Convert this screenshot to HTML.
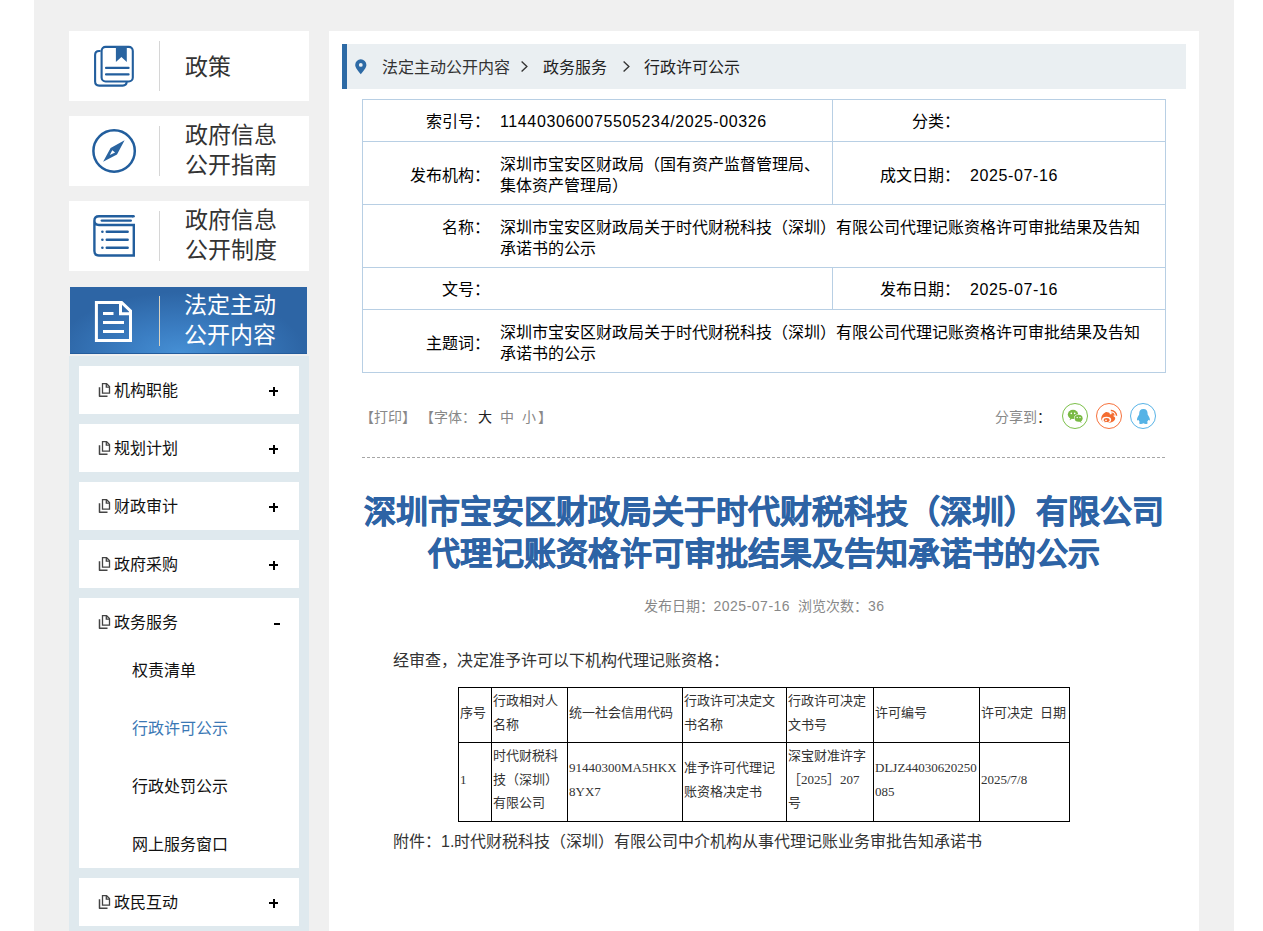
<!DOCTYPE html>
<html lang="zh-CN"><head><meta charset="utf-8">
<style>
*{margin:0;padding:0;box-sizing:border-box}
html,body{width:1263px;height:931px;overflow:hidden;background:#fff}
body{font-family:"Liberation Sans",sans-serif;color:#333;position:relative}
.a{position:absolute}
.nw{white-space:nowrap}
.j{display:inline-block;text-align:justify;text-align-last:justify}
#page{left:34px;top:0;width:1200px;height:931px;background:#f0f0f0}
.nbox{background:#fff;left:69px;width:240px;height:70px}
.sep{width:1px;height:50px;background:#d6d6d6;left:159px}
.ntxt{left:185px;font-size:23px;line-height:30px;color:#333}
.active{left:70px;top:287px;width:237px;height:67px;background:radial-gradient(ellipse 125px 62px at 110px 67px,#4690d5 0%,#3b7ec3 40%,#2d65a5 100%);border-bottom:1px solid #245c9c}
.subbg{left:69px;top:356px;width:240px;height:575px;background:#dfe9ee}
.item{left:79px;width:220px;background:#fff}
.itxt{font-size:16px;line-height:24px;color:#111}
.plus{width:9px;height:9px}
#main{left:329px;top:31px;width:870px;height:900px;background:#fff}
#bc{left:342px;top:44px;width:844px;height:45px;background:#eaeff2;border-left:5px solid #2d6aa5}
.bct{font-size:16px;line-height:24px;top:56px;color:#333}
.hl{background:#b8cfe4}
.lbl{font-size:16px;line-height:21px;color:#000;text-align:right}
.val{font-size:16px;line-height:21px;color:#000}
.tool{font-size:14px;line-height:20px;color:#888}
.title{left:362px;width:804px;text-align:center;font-size:32px;line-height:42px;font-weight:bold;color:#2d63a5;-webkit-text-stroke:0.6px #2d63a5}
.it{border-collapse:collapse;font-size:13px;color:#333}
.vl{background:#000}
.ct{font-size:13px;line-height:23.5px;color:#333}
.sf{font-family:"Liberation Serif",serif}
</style></head><body>
<div id="page" class="a"></div>

<!-- sidebar top boxes -->
<div class="a nbox" style="top:31px"></div>
<div class="a sep" style="top:41px"></div>
<div class="a ntxt nw" style="top:52px"><span class="j" style="width:2em">政策</span></div>
<svg class="a" style="left:88px;top:40px" width="52" height="52" viewBox="88 40 52 52">
 <rect x="101.6" y="46.9" width="31.2" height="34.6" rx="4" fill="none" stroke="#225e9d" stroke-width="2.1"/>
 <path d="M100.6 51 H99.1 Q95.1 51 95.1 55 V81.6 Q95.1 85.6 99.1 85.6 H122.7 Q126.7 85.6 126.7 81.5" fill="none" stroke="#225e9d" stroke-width="2.1"/>
 <path d="M115.9 46 H126.8 V62 L121.4 57 L115.9 62 Z" fill="#2a64a0"/>
 <path d="M106 67.9 H128.6 M106 74.4 H128.6" stroke="#225e9d" stroke-width="2.1" stroke-linecap="round"/>
</svg>

<div class="a nbox" style="top:116px"></div>
<div class="a sep" style="top:126px"></div>
<div class="a ntxt nw" style="top:120px"><span class="j" style="width:4em">政府信息</span><br><span class="j" style="width:4em">公开指南</span></div>
<svg class="a" style="left:88px;top:124px" width="52" height="52" viewBox="88 124 52 52">
 <circle cx="114.1" cy="151" r="20.7" fill="none" stroke="#225e9d" stroke-width="2.5"/>
 <path d="M124.6 140.2 L117 154.4 L103.1 161.7 L110.6 148 Z M109.8 155 L115.1 152.5 L112.3 150.3 Z" fill="#2a64a0" fill-rule="evenodd"/>
</svg>

<div class="a nbox" style="top:201px"></div>
<div class="a sep" style="top:211px"></div>
<div class="a ntxt nw" style="top:205px"><span class="j" style="width:4em">政府信息</span><br><span class="j" style="width:4em">公开制度</span></div>
<svg class="a" style="left:88px;top:208px" width="52" height="52" viewBox="88 208 52 52">
 <g fill="none" stroke="#225e9d" stroke-width="2.4" stroke-linecap="round">
 <path d="M133 216.3 H99 Q94.4 216.3 94.4 220.8 Q94.4 225 99 225 H133.8 V255.5 H99 Q94.4 255.5 94.4 251 V220.8" stroke-linecap="butt"/>
 <path d="M133 216.3 H133.6"/>
 <path d="M101.8 220.6 H130.8"/>
 <path d="M106.7 231.7 H127.7 M106.7 239.7 H127.7 M106.7 247.8 H127.7"/>
 </g>
 <circle cx="102.4" cy="231.7" r="1.3" fill="#225e9d"/><circle cx="102.4" cy="239.7" r="1.3" fill="#225e9d"/><circle cx="102.4" cy="247.8" r="1.3" fill="#225e9d"/>
</svg>

<!-- active -->
<div class="a active"></div>
<div class="a" style="left:159px;top:296px;width:1px;height:50px;background:#d9d2c0"></div>
<div class="a ntxt nw" style="top:290px;left:184px;color:#fff"><span class="j" style="width:4em">法定主动</span><br><span class="j" style="width:4em">公开内容</span></div>
<svg class="a" style="left:88px;top:296px" width="52" height="52" viewBox="88 296 52 52">
 <path d="M96.4 302.4 H121.6 L130.5 311 V340.5 H96.4 Z" fill="none" stroke="#fff" stroke-width="3"/>
 <path d="M120.5 302.4 V313.8 H130.5" fill="none" stroke="#fff" stroke-width="3"/>
 <path d="M103 313.6 H113.5 M103 322.6 H124 M103 331.4 H124" stroke="#fff" stroke-width="3"/>
</svg>

<div class="a subbg"></div>
<div class="a item" style="top:366px;height:48px"></div>
<svg class="a" style="left:95px;top:378px" width="20" height="22" viewBox="0 0 20 22"><g fill="none" stroke="#444" stroke-width="1.3"><path d="M7.5 5.7 H11.6 L14.5 8.6 V15.1 H7.5 Z"/><path d="M11.3 5.7 V9.2 H14.5"/><path d="M4.5 9.3 V18.2 H12.5" stroke-width="1.5" stroke-linejoin="round"/></g></svg>
<div class="a itxt nw" style="left:114px;top:379px"><span class="j" style="width:4em">机构职能</span></div>
<div class="a" style="left:269px;top:390px;width:9px;height:2px;background:#000"></div>
<div class="a" style="left:272.5px;top:387px;width:2px;height:9px;background:#000"></div>
<div class="a item" style="top:424px;height:48px"></div>
<svg class="a" style="left:95px;top:436px" width="20" height="22" viewBox="0 0 20 22"><g fill="none" stroke="#444" stroke-width="1.3"><path d="M7.5 5.7 H11.6 L14.5 8.6 V15.1 H7.5 Z"/><path d="M11.3 5.7 V9.2 H14.5"/><path d="M4.5 9.3 V18.2 H12.5" stroke-width="1.5" stroke-linejoin="round"/></g></svg>
<div class="a itxt nw" style="left:114px;top:437px"><span class="j" style="width:4em">规划计划</span></div>
<div class="a" style="left:269px;top:448px;width:9px;height:2px;background:#000"></div>
<div class="a" style="left:272.5px;top:445px;width:2px;height:9px;background:#000"></div>
<div class="a item" style="top:482px;height:48px"></div>
<svg class="a" style="left:95px;top:494px" width="20" height="22" viewBox="0 0 20 22"><g fill="none" stroke="#444" stroke-width="1.3"><path d="M7.5 5.7 H11.6 L14.5 8.6 V15.1 H7.5 Z"/><path d="M11.3 5.7 V9.2 H14.5"/><path d="M4.5 9.3 V18.2 H12.5" stroke-width="1.5" stroke-linejoin="round"/></g></svg>
<div class="a itxt nw" style="left:114px;top:495px"><span class="j" style="width:4em">财政审计</span></div>
<div class="a" style="left:269px;top:506px;width:9px;height:2px;background:#000"></div>
<div class="a" style="left:272.5px;top:503px;width:2px;height:9px;background:#000"></div>
<div class="a item" style="top:540px;height:48px"></div>
<svg class="a" style="left:95px;top:552px" width="20" height="22" viewBox="0 0 20 22"><g fill="none" stroke="#444" stroke-width="1.3"><path d="M7.5 5.7 H11.6 L14.5 8.6 V15.1 H7.5 Z"/><path d="M11.3 5.7 V9.2 H14.5"/><path d="M4.5 9.3 V18.2 H12.5" stroke-width="1.5" stroke-linejoin="round"/></g></svg>
<div class="a itxt nw" style="left:114px;top:553px"><span class="j" style="width:4em">政府采购</span></div>
<div class="a" style="left:269px;top:564px;width:9px;height:2px;background:#000"></div>
<div class="a" style="left:272.5px;top:561px;width:2px;height:9px;background:#000"></div>
<div class="a item" style="top:598px;height:270px"></div>
<svg class="a" style="left:95px;top:610px" width="20" height="22" viewBox="0 0 20 22"><g fill="none" stroke="#444" stroke-width="1.3"><path d="M7.5 5.7 H11.6 L14.5 8.6 V15.1 H7.5 Z"/><path d="M11.3 5.7 V9.2 H14.5"/><path d="M4.5 9.3 V18.2 H12.5" stroke-width="1.5" stroke-linejoin="round"/></g></svg>
<div class="a itxt nw" style="left:114px;top:611px"><span class="j" style="width:4em">政务服务</span></div>
<div class="a" style="left:274px;top:623px;width:5.5px;height:2px;background:#000"></div>
<div class="a item" style="top:878px;height:48px"></div>
<svg class="a" style="left:95px;top:890px" width="20" height="22" viewBox="0 0 20 22"><g fill="none" stroke="#444" stroke-width="1.3"><path d="M7.5 5.7 H11.6 L14.5 8.6 V15.1 H7.5 Z"/><path d="M11.3 5.7 V9.2 H14.5"/><path d="M4.5 9.3 V18.2 H12.5" stroke-width="1.5" stroke-linejoin="round"/></g></svg>
<div class="a itxt nw" style="left:114px;top:891px"><span class="j" style="width:4em">政民互动</span></div>
<div class="a" style="left:269px;top:902px;width:9px;height:2px;background:#000"></div>
<div class="a" style="left:272.5px;top:899px;width:2px;height:9px;background:#000"></div>
<div class="a itxt nw" style="left:132px;top:659px;color:#111"><span class="j" style="width:4em">权责清单</span></div>
<div class="a itxt nw" style="left:132px;top:717px;color:#3b78b5"><span class="j" style="width:6em">行政许可公示</span></div>
<div class="a itxt nw" style="left:132px;top:775px;color:#111"><span class="j" style="width:6em">行政处罚公示</span></div>
<div class="a itxt nw" style="left:132px;top:833px;color:#111"><span class="j" style="width:6em">网上服务窗口</span></div>

<!-- main panel -->
<div id="main" class="a"></div>
<div id="bc" class="a"></div>
<svg class="a" style="left:352px;top:56.6px" width="18" height="20" viewBox="352 56 18 20">
 <path d="M360.8 73.2 C358 69.5 355.2 66.6 355.2 63.9 A5.6 5.6 0 0 1 366.4 63.9 C366.4 66.6 363.6 69.5 360.8 73.2 Z M360.8 62 A1.9 1.9 0 1 0 360.8 65.8 A1.9 1.9 0 1 0 360.8 62 Z" fill="#2d6aa5" fill-rule="evenodd"/>
</svg>
<div class="a bct nw" style="left:382px"><span class="j" style="width:8em">法定主动公开内容</span></div>
<svg class="a" style="left:518px;top:58px" width="12" height="16" viewBox="0 0 12 16"><path d="M3.6 3.4 L8.9 8.5 L3.6 13.6" fill="none" stroke="#333" stroke-width="1.35"/></svg>
<div class="a bct nw" style="left:543px;color:#222"><span class="j" style="width:4em">政务服务</span></div>
<svg class="a" style="left:620px;top:58px" width="12" height="16" viewBox="0 0 12 16"><path d="M3.6 3.4 L8.9 8.5 L3.6 13.6" fill="none" stroke="#333" stroke-width="1.35"/></svg>
<div class="a bct nw" style="left:644px;color:#222"><span class="j" style="width:6em">行政许可公示</span></div>

<div class="a hl" style="left:362px;top:99px;width:804px;height:1px"></div>
<div class="a hl" style="left:362px;top:141px;width:804px;height:1px"></div>
<div class="a hl" style="left:362px;top:204px;width:804px;height:1px"></div>
<div class="a hl" style="left:362px;top:267px;width:804px;height:1px"></div>
<div class="a hl" style="left:362px;top:309px;width:804px;height:1px"></div>
<div class="a hl" style="left:362px;top:372px;width:804px;height:1px"></div>
<div class="a hl" style="left:362px;top:99px;width:1px;height:274px"></div>
<div class="a hl" style="left:1165px;top:99px;width:1px;height:274px"></div>
<div class="a hl" style="left:832px;top:99px;width:1px;height:105px"></div>
<div class="a hl" style="left:832px;top:267px;width:1px;height:42px"></div>
<div class="a lbl nw" style="left:290px;width:200px;top:111px;line-height:21px"><span class="j" style="width:4em">索引号：</span></div>
<div class="a val nw" style="left:500px;top:111px;line-height:21px;letter-spacing:0.62px">114403060075505234/2025-00326</div>
<div class="a lbl nw" style="left:760px;width:200px;top:111px;line-height:21px"><span class="j" style="width:3em">分类：</span></div>
<div class="a lbl nw" style="left:290px;width:200px;top:165px;line-height:21px"><span class="j" style="width:5em">发布机构：</span></div>
<div class="a val nw" style="left:500px;top:154px;line-height:21px;"><span class="j" style="width:20em">深圳市宝安区财政局（国有资产监督管理局、</span><br><span class="j" style="width:8em">集体资产管理局）</span></div>
<div class="a lbl nw" style="left:760px;width:200px;top:165px;line-height:21px"><span class="j" style="width:5em">成文日期：</span></div>
<div class="a val nw" style="left:970px;top:165px;line-height:21px;letter-spacing:0.62px">2025-07-16</div>
<div class="a lbl nw" style="left:290px;width:200px;top:217px;line-height:21px"><span class="j" style="width:3em">名称：</span></div>
<div class="a val nw" style="left:500px;top:217px;line-height:21px;"><span class="j" style="width:40em">深圳市宝安区财政局关于时代财税科技（深圳）有限公司代理记账资格许可审批结果及告知</span><br><span class="j" style="width:6em">承诺书的公示</span></div>
<div class="a lbl nw" style="left:290px;width:200px;top:279px;line-height:21px"><span class="j" style="width:3em">文号：</span></div>
<div class="a lbl nw" style="left:760px;width:200px;top:279px;line-height:21px"><span class="j" style="width:5em">发布日期：</span></div>
<div class="a val nw" style="left:970px;top:279px;line-height:21px;letter-spacing:0.62px">2025-07-16</div>
<div class="a lbl nw" style="left:290px;width:200px;top:333px;line-height:21px"><span class="j" style="width:4em">主题词：</span></div>
<div class="a val nw" style="left:500px;top:322px;line-height:21px;"><span class="j" style="width:40em">深圳市宝安区财政局关于时代财税科技（深圳）有限公司代理记账资格许可审批结果及告知</span><br><span class="j" style="width:6em">承诺书的公示</span></div>
<div class="a tool nw" style="left:360px;top:407px"><span class="j" style="width:4em">【打印】</span></div>
<div class="a tool nw" style="left:420px;top:407px"><span class="j" style="width:4em">【字体：</span></div>
<div class="a tool nw" style="left:478px;top:407px;color:#222"><span class="j" style="width:1em">大</span></div>
<div class="a tool nw" style="left:500px;top:407px"><span class="j" style="width:1em">中</span></div>
<div class="a tool nw" style="left:522px;top:407px"><span class="j" style="width:1em">小</span><span style="margin-left:2px"><span class="j" style="width:1em">】</span></span></div>
<div class="a tool nw" style="left:995px;top:407px"><span class="j" style="width:3em">分享到</span><span style="color:#222"><span class="j" style="width:1em">：</span></span></div>
<div class="a" style="left:1062px;top:403px;width:26px;height:26px;border:1.6px solid #7cc04a;border-radius:50%"></div>
<div class="a" style="left:1096px;top:403px;width:26px;height:26px;border:1.6px solid #f7713b;border-radius:50%"></div>
<div class="a" style="left:1130px;top:403px;width:26px;height:26px;border:1.6px solid #57b3e7;border-radius:50%"></div>
<svg class="a" style="left:1062px;top:403px" width="26" height="26" viewBox="0 0 26 26">
 <ellipse cx="11" cy="11.4" rx="5.2" ry="4.6" fill="#79b944"/>
 <path d="M8.2 15 L7.6 17.2 L10.3 15.6 Z" fill="#79b944"/>
 <ellipse cx="16.6" cy="15.2" rx="4.6" ry="4" fill="#fff"/>
 <ellipse cx="16.6" cy="15.2" rx="4" ry="3.5" fill="#79b944"/>
 <path d="M18.6 18 L19.8 20 L17 18.6 Z" fill="#79b944"/>
 <circle cx="9.3" cy="10.4" r="0.8" fill="#fff"/><circle cx="12.7" cy="10.4" r="0.8" fill="#fff"/>
 <circle cx="15.2" cy="14.5" r="0.7" fill="#fff"/><circle cx="18" cy="14.5" r="0.7" fill="#fff"/>
</svg>
<svg class="a" style="left:1096px;top:403px" width="26" height="26" viewBox="0 0 26 26">
 <path d="M9.5 9.2 C6.8 10.6 5.2 13 5.2 15.4 C5.2 18.2 8.4 19.9 11.8 19.9 C16.2 19.9 19.2 17.6 19.2 15.3 C19.2 14 18.2 13.4 17.4 13.2 C17.8 12.2 17.8 11 16.4 10.9 C15.4 10.8 14.4 11.3 13.8 11.6 C14 10.6 13.6 9.6 12.6 9.4 C11.6 9.2 10.4 8.8 9.5 9.2 Z" fill="#f46c30"/>
 <ellipse cx="10.6" cy="16.8" rx="4.6" ry="3.1" fill="#fff"/>
 <ellipse cx="10.6" cy="17" rx="3" ry="2" fill="#f46c30"/>
 <circle cx="10" cy="17.4" r="0.8" fill="#fff"/>
 <path d="M14.8 7.6 A5.4 5.4 0 0 1 20.6 12.8" fill="none" stroke="#f46c30" stroke-width="1.5"/>
 <path d="M15.4 10 A2.6 2.6 0 0 1 18 12.6" fill="none" stroke="#f46c30" stroke-width="1.2"/>
</svg>
<svg class="a" style="left:1130px;top:403px" width="26" height="26" viewBox="0 0 26 26">
 <path d="M13.4 5.9 C10.4 5.9 9.2 8 9.2 10.4 L9.1 11.8 C8.2 13 7 14.8 7 16.6 C7 17.8 7.7 17.8 8.4 16.8 C8.7 17.8 9.2 18.5 9.8 19.1 C9 19.6 8.8 20.3 9.6 20.7 C10.6 21.1 12.3 21 13.4 20.3 C14.5 21 16.2 21.1 17.2 20.7 C18 20.3 17.8 19.6 17 19.1 C17.6 18.5 18.1 17.8 18.4 16.8 C19.1 17.8 19.9 17.8 19.9 16.6 C19.8 14.8 18.6 13 17.7 11.8 L17.6 10.4 C17.6 8 16.4 5.9 13.4 5.9 Z" fill="#55b3e6"/>
</svg>
<div class="a" style="left:362px;top:457px;width:804px;height:1px;background:repeating-linear-gradient(90deg,#a6a6a6 0,#a6a6a6 3px,transparent 3px,transparent 5px)"></div>
<div class="a title nw" style="top:491px"><span class="j" style="width:25em">深圳市宝安区财政局关于时代财税科技（深圳）有限公司</span><br><span class="j" style="width:21em">代理记账资格许可审批结果及告知承诺书的公示</span></div>
<div class="a tool nw" style="left:362px;width:804px;top:596px;text-align:center"><span class="j" style="width:5em">发布日期：</span><span style="letter-spacing:0.5px">2025-07-16</span> &nbsp;<span class="j" style="width:5em">浏览次数：</span><span style="letter-spacing:0.5px">36</span></div>
<div class="a val nw" style="left:393px;top:649px;line-height:24px;color:#333"><span class="j" style="width:21em">经审查，决定准予许可以下机构代理记账资格：</span></div>
<div class="a val nw" style="left:393px;top:830px;line-height:24px;color:#333"><span class="j" style="width:3em">附件：</span>1.<span class="j" style="width:33em">时代财税科技（深圳）有限公司中介机构从事代理记账业务审批告知承诺书</span></div>

<div class="a vl" style="left:458px;top:687px;width:612px;height:1px"></div>
<div class="a vl" style="left:458px;top:742px;width:612px;height:1px"></div>
<div class="a vl" style="left:458px;top:821px;width:612px;height:1px"></div>
<div class="a vl" style="left:458px;top:687px;width:1px;height:135px"></div>
<div class="a vl" style="left:491px;top:687px;width:1px;height:135px"></div>
<div class="a vl" style="left:567px;top:687px;width:1px;height:135px"></div>
<div class="a vl" style="left:682px;top:687px;width:1px;height:135px"></div>
<div class="a vl" style="left:786px;top:687px;width:1px;height:135px"></div>
<div class="a vl" style="left:873px;top:687px;width:1px;height:135px"></div>
<div class="a vl" style="left:979px;top:687px;width:1px;height:135px"></div>
<div class="a vl" style="left:1069px;top:687px;width:1px;height:135px"></div>
<div class="a nw ct" style="left:460px;top:701px"><span class="j" style="width:2em">序号</span></div>
<div class="a nw ct" style="left:493px;top:689px"><span class="j" style="width:5em">行政相对人</span><br><span class="j" style="width:2em">名称</span></div>
<div class="a nw ct" style="left:569px;top:701px"><span class="j" style="width:8em">统一社会信用代码</span></div>
<div class="a nw ct" style="left:684px;top:689px"><span class="j" style="width:7em">行政许可决定文</span><br><span class="j" style="width:3em">书名称</span></div>
<div class="a nw ct" style="left:788px;top:689px"><span class="j" style="width:6em">行政许可决定</span><br><span class="j" style="width:3em">文书号</span></div>
<div class="a nw ct" style="left:875px;top:701px"><span class="j" style="width:4em">许可编号</span></div>
<div class="a nw ct" style="left:981px;top:701px"><span class="j" style="width:4em">许可决定</span>&nbsp; <span class="j" style="width:2em">日期</span></div>
<div class="a nw ct sf" style="left:460px;top:768px">1</div>
<div class="a nw ct" style="left:493px;top:744px"><span class="j" style="width:5em">时代财税科</span><br><span class="j" style="width:5em">技（深圳）</span><br><span class="j" style="width:4em">有限公司</span></div>
<div class="a nw ct sf" style="left:569px;top:756px">91440300MA5HKX<br>8YX7</div>
<div class="a nw ct" style="left:684px;top:756px"><span class="j" style="width:7em">准予许可代理记</span><br><span class="j" style="width:6em">账资格决定书</span></div>
<div class="a nw ct" style="left:788px;top:744px"><span class="j" style="width:6em">深宝财准许字</span><br><span class="sf"><span class="j" style="width:1em">［</span>2025<span class="j" style="width:1em">］</span>207</span><br><span class="j" style="width:1em">号</span></div>
<div class="a nw ct sf" style="left:875px;top:756px">DLJZ44030620250<br>085</div>
<div class="a nw ct sf" style="left:981px;top:768px">2025/7/8</div>
</body></html>
